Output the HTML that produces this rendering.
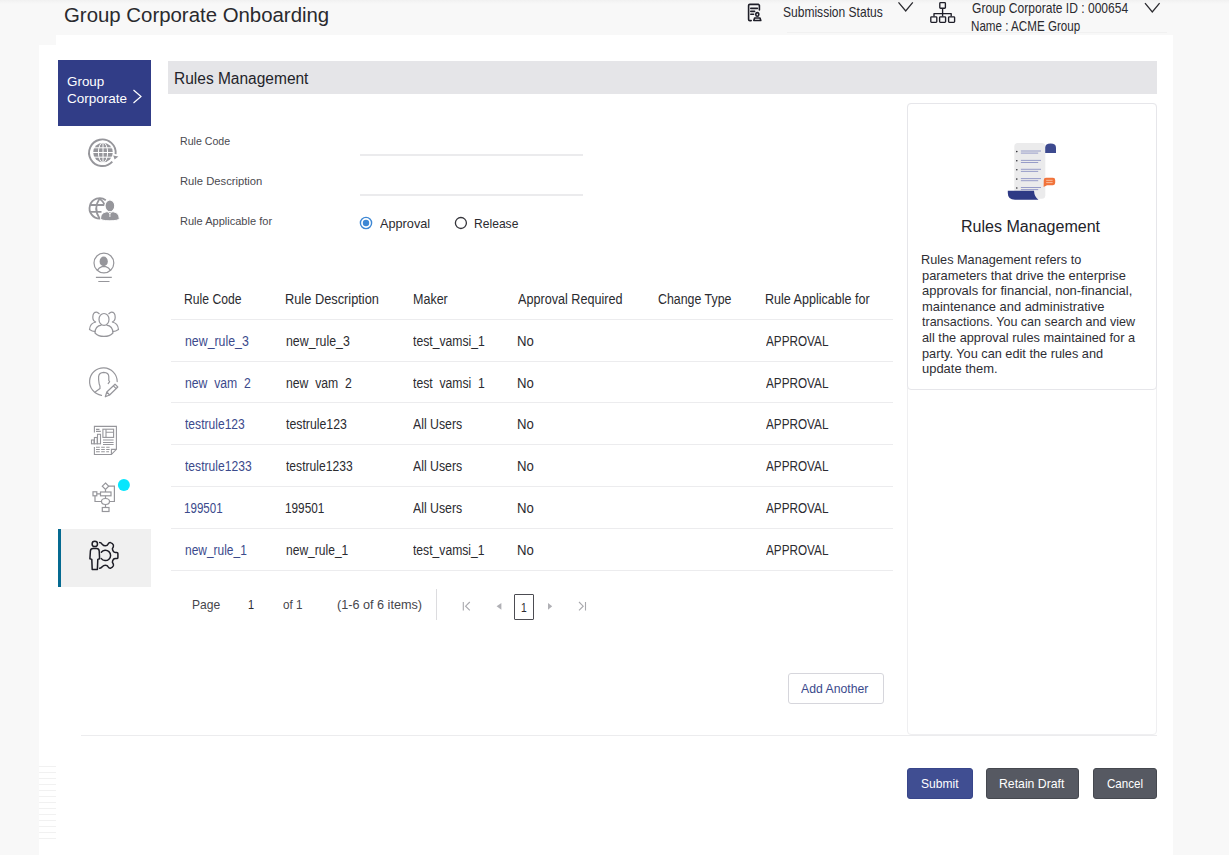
<!DOCTYPE html>
<html><head><meta charset="utf-8">
<style>
*{margin:0;padding:0;box-sizing:border-box}
html,body{width:1229px;height:855px;overflow:hidden;background:#f8f8f8;font-family:"Liberation Sans",sans-serif;color:#2b2b2f;position:relative}
.a{position:absolute;white-space:nowrap}
svg.a{overflow:visible}
</style></head><body>
<div class="a" style="left:0px;top:0px;width:1229px;height:4px;background:linear-gradient(#f1f1f1,#f8f8f8)"></div>
<div class="a" style="left:787px;top:32px;width:380px;height:1px;background:#f1f1f1"></div>
<div class="a" style="left:39px;top:45px;width:1134px;height:810px;background:#fff"></div>
<div class="a" style="left:56px;top:35px;width:1117px;height:10px;background:#fff"></div>
<div class="a" style="left:39px;top:766px;width:17px;height:1px;background:#f1f1f1"></div>
<div class="a" style="left:39px;top:772px;width:17px;height:1px;background:#f1f1f1"></div>
<div class="a" style="left:39px;top:778px;width:17px;height:1px;background:#f1f1f1"></div>
<div class="a" style="left:39px;top:784px;width:17px;height:1px;background:#f1f1f1"></div>
<div class="a" style="left:39px;top:790px;width:17px;height:1px;background:#f1f1f1"></div>
<div class="a" style="left:39px;top:796px;width:17px;height:1px;background:#f1f1f1"></div>
<div class="a" style="left:39px;top:802px;width:17px;height:1px;background:#f1f1f1"></div>
<div class="a" style="left:39px;top:808px;width:17px;height:1px;background:#f1f1f1"></div>
<div class="a" style="left:39px;top:814px;width:17px;height:1px;background:#f1f1f1"></div>
<div class="a" style="left:39px;top:820px;width:17px;height:1px;background:#f1f1f1"></div>
<div class="a" style="left:39px;top:826px;width:17px;height:1px;background:#f1f1f1"></div>
<div class="a" style="left:39px;top:832px;width:17px;height:1px;background:#f1f1f1"></div>
<div class="a" style="left:39px;top:838px;width:17px;height:1px;background:#f1f1f1"></div>
<div class="a" style="left:63.91px;top:4.75px;font-size:20.5px;line-height:20.5px;color:#2a2a2e;font-weight:normal;transform:scaleX(0.9945);transform-origin:0 0;">Group Corporate Onboarding</div>
<svg class="a" style="left:740px;top:0px" width="30" height="30" viewBox="0 0 30 30"><g fill="none" stroke="#1e1e28" stroke-width="1.6" stroke-linecap="round" stroke-linejoin="round">
<path d="M11.2 20.6 H9.8 Q8.6 20.6 8.6 19.4 V5.6 Q8.6 4.4 9.8 4.4 H18.4 L19.4 5.4 V10"/>
<path d="M10.8 8.4 H17.4 M10.8 11.4 H14.6 M10.8 14.3 H13.6"/>
<ellipse cx="17.3" cy="14.4" rx="1.5" ry="1.8"/>
<path d="M13.8 20.5 L14.6 18 H20 L20.8 20.5 Z"/></g></svg>
<div class="a" style="left:782.90px;top:4.40px;font-size:15px;line-height:15px;color:#2b2b30;font-weight:normal;transform:scaleX(0.8026);transform-origin:0 0;">Submission Status</div>
<svg class="a" style="left:895px;top:0px" width="20" height="14" viewBox="0 0 20 14"><path d="M3.5 2.3 L10.7 11 L17.8 2.3" fill="none" stroke="#2b2b30" stroke-width="1.3"/></svg>
<svg class="a" style="left:928px;top:0px" width="30" height="26" viewBox="0 0 30 26"><g fill="none" stroke="#1e1e28" stroke-width="1.35" stroke-linejoin="round">
<rect x="11.8" y="2.6" width="5.6" height="5.6" rx="0.8"/>
<path d="M14.6 8.2 V13.6 M6 16.6 V13.6 H23.2 V16.6 M14.6 13.6 V16.6"/>
<rect x="2.8" y="16.8" width="6" height="5.6" rx="0.8"/>
<rect x="11.6" y="16.8" width="6" height="5.6" rx="0.8"/>
<rect x="20.6" y="16.8" width="6" height="5.6" rx="0.8"/></g></svg>
<div class="a" style="left:972.20px;top:1.03px;font-size:14.5px;line-height:14.5px;color:#2b2b30;font-weight:normal;transform:scaleX(0.8315);transform-origin:0 0;">Group Corporate ID : 000654</div>
<div class="a" style="left:971.40px;top:18.53px;font-size:14.5px;line-height:14.5px;color:#2b2b30;font-weight:normal;transform:scaleX(0.8019);transform-origin:0 0;">Name : ACME Group</div>
<svg class="a" style="left:1142px;top:0px" width="20" height="14" viewBox="0 0 20 14"><path d="M3 3.2 L10.3 12 L17.6 3.2" fill="none" stroke="#2b2b30" stroke-width="1.3"/></svg>
<div class="a" style="left:58px;top:60px;width:93px;height:66px;background:#313d87"></div>
<div class="a" style="left:67.30px;top:75.20px;font-size:13px;line-height:13px;color:#fff;font-weight:normal;transform:scaleX(1.0306);transform-origin:0 0;">Group</div>
<div class="a" style="left:67.30px;top:92.20px;font-size:13px;line-height:13px;color:#fff;font-weight:normal;transform:scaleX(1.0369);transform-origin:0 0;">Corporate</div>
<svg class="a" style="left:130px;top:88px" width="14" height="17" viewBox="0 0 14 17"><path d="M3.5 2 L11 8.5 L3.5 15" fill="none" stroke="#fff" stroke-width="1.2"/></svg>
<svg class="a" style="left:84px;top:134px" width="40" height="40" viewBox="0 0 40 40"><g fill="none" stroke="#96969b" stroke-width="1.9">
<path d="M28.3 27.6 A13.3 13.3 0 1 1 31.6 20.2"/></g>
<path d="M29.2 21.4 L34.4 22.6 L30.6 25.4 Z" fill="#96969b"/>
<circle cx="19" cy="18.5" r="9.8" fill="#96969b"/>
<g fill="none" stroke="#fff" stroke-width="1">
<path d="M9 18.5 H29 M9.5 13.8 H28.5 M9.5 23.2 H28.5"/>
<ellipse cx="19" cy="18.5" rx="4.6" ry="10"/>
<path d="M19 8.5 V28.5"/></g></svg>
<svg class="a" style="left:84px;top:190px" width="40" height="40" viewBox="0 0 40 40"><g fill="none" stroke="#96969b" stroke-width="1.8">
<path d="M21.8 10.2 A10.2 10.2 0 1 0 16.2 28.6"/>
<path d="M15.6 8.6 Q8.8 18.6 15.6 28.6 M15.6 8.6 Q18.8 11 20.6 14.6 M6.2 15 H20.5 M6.2 21.8 H17.5"/></g>
<ellipse cx="25.9" cy="15.8" rx="4.9" ry="6" fill="#96969b" stroke="#fff" stroke-width="1.2"/>
<path d="M16.6 28.4 Q16.6 22.8 22.4 21.8 H29.4 Q35.2 22.8 35.2 28.4 Q35.2 30.8 25.9 30.8 Q16.6 30.8 16.6 28.4Z" fill="#96969b" stroke="#fff" stroke-width="1"/>
<path d="M24.4 22.2 L25.9 24 L27.4 22.2 M25.9 24 V27" stroke="#fff" stroke-width="0.9" fill="none"/></svg>
<svg class="a" style="left:84px;top:247px" width="40" height="40" viewBox="0 0 40 40"><g fill="none" stroke="#96969b" stroke-width="1.2">
<circle cx="19.9" cy="16" r="9.9"/>
<path d="M13.3 23.4 Q15 20.6 18 19.6 H21.8 Q24.8 20.6 26.5 23.4"/>
<path d="M11.9 30.4 H27.8 M14.3 34.5 H25.5"/></g>
<ellipse cx="19.7" cy="14.4" rx="4.1" ry="4.9" fill="#96969b"/></svg>
<svg class="a" style="left:84px;top:304px" width="40" height="40" viewBox="0 0 40 40"><g fill="none" stroke="#96969b" stroke-width="1.2">
<path d="M15.5 10 Q13.5 8.2 12.6 8.2 Q8.8 8.2 8.8 13.2 Q8.8 17 12 18 Q6 19 5.5 25.5 Q8 27.5 11.3 27.6"/>
<path d="M24.5 10 Q26.5 8.2 27.4 8.2 Q31.2 8.2 31.2 13.2 Q31.2 17 28 18 Q34 19 34.5 25.5 Q32 27.5 28.7 27.6"/>
<ellipse cx="20" cy="15.4" rx="5" ry="5.9"/>
<path d="M17.5 21.2 Q11 22 11 29 Q14 32.4 20 32.4 Q26 32.4 28.9 29 Q28.9 22 22.5 21.2"/></g></svg>
<svg class="a" style="left:84px;top:362px" width="40" height="40" viewBox="0 0 40 40"><g fill="none" stroke="#96969b" stroke-width="1.2" stroke-linecap="round" stroke-linejoin="round">
<path d="M33.2 19.6 A13.8 13.8 0 1 0 17.5 33.3"/>
<path d="M11.5 29.8 L16 26.6 Q16.6 24.5 15.2 22 Q14.4 18 14.6 14.6 Q15 10.6 19.8 10.4 Q24.6 10.6 24.8 14.6 V18.5 L25.6 19.6 L24.2 21.6"/>
<path d="M21.3 34.8 L22.8 30 L31 22.2 L33.8 25 L25.6 33 Z M29.4 23.8 L32.2 26.6 M22.8 30 L25.6 33"/></g></svg>
<svg class="a" style="left:84px;top:420px" width="40" height="40" viewBox="0 0 40 40"><g fill="none" stroke="#96969b" stroke-width="1.1">
<path d="M10.4 12.6 V6.4 H32.4 V29.4 L27.4 34.5 H10.4 V27"/>
<path d="M27.4 34.5 V29.4 H32.4"/>
<rect x="7.5" y="20" width="2.6" height="3.8"/><rect x="10.4" y="17.5" width="2.8" height="6.3"/><rect x="13.5" y="14.3" width="3" height="9.5"/>
<rect x="18.9" y="9.2" width="10.7" height="8.2"/><path d="M22 9.2 V17.4 M22 12.3 H29.6"/>
<path d="M12 9.4 H15.5 M12 11.4 H16.8 M19 20 H29.6 M19 22.5 H29.6 M19 24.5 H29.6 M12 27.3 H15.8 M17.2 27.3 H20.8 M22.2 27.3 H25.6 M12 29.5 H15.8 M17.2 29.5 H20.8 M22.2 29.5 H25.6 M12 31.8 H15.8 M17.2 31.8 H20.8 M22.2 31.8 H25"/></g></svg>
<svg class="a" style="left:84px;top:474px" width="50" height="50" viewBox="0 0 50 50"><g fill="none" stroke="#96969b" stroke-width="1.2">
<path d="M21.5 9 L24.7 12.2 L21.5 15.4 L18.3 12.2 Z"/>
<path d="M24.7 12.2 H30.4 V27.5 H25.5 M21.5 15.4 V18 M21.5 21.8 V24.5 M12.8 19.8 H16.5 M11 21.8 V27.5 H17.5 M21.5 30.5 V33.5"/>
<rect x="16.5" y="18" width="10.5" height="3.8"/>
<rect x="9" y="17.8" width="3.8" height="4"/>
<ellipse cx="21.5" cy="27.5" rx="4" ry="3"/>
<rect x="18.3" y="33.5" width="6.7" height="4"/></g>
<circle cx="39.9" cy="11" r="6" fill="#07e6fd"/></svg>
<div class="a" style="left:58px;top:529px;width:93px;height:58px;background:#f0f0f0"></div>
<div class="a" style="left:58px;top:529px;width:3px;height:58px;background:#056a91"></div>
<svg class="a" style="left:84px;top:535px" width="40" height="40" viewBox="0 0 40 40"><g fill="none" stroke="#1d1d26" stroke-width="1.5" stroke-linejoin="round" stroke-linecap="round">
<circle cx="10.8" cy="8.9" r="2.7"/>
<path d="M9 13.6 H12.6 Q15 13.6 15.2 16 L15.6 23.8 L13.8 24.4 L13.4 34.4 H8.2 L7.8 24.4 L5.9 23.8 L6.4 16 Q6.6 13.6 9 13.6 Z"/>
<path d="M17.3 17.2 A5.2 5.2 0 1 1 17.3 23.6"/>
<path d="M15.6 7.6 Q17 7.6 18.2 9.2 Q19.5 10.8 21.4 10.8 Q23.4 10.8 24 9.2 Q25 7.4 26.4 7.6 Q28.6 8.2 29.4 10 Q29.8 11.6 28.4 13.6 Q28.4 15 29.5 16.6 Q30 17.4 31.5 17.4 H32.8 Q33.9 17.4 33.9 18.6 V22.4 Q33.9 23.6 32.8 23.6 H31.5 Q30 23.6 29.5 24.3 Q28.4 25.9 28.4 27.2 Q29.8 29.2 29.4 30.8 Q28.6 32.6 26.4 33.2 Q25 33.4 24 31.6 Q23.4 30.2 21.4 30.2 Q19.5 30.2 18.2 31.8 Q17 33.4 15.6 33.2"/></g></svg>
<div class="a" style="left:168px;top:61px;width:989px;height:33px;background:#e5e5e8"></div>
<div class="a" style="left:173.83px;top:70.86px;font-size:16px;line-height:16px;color:#23232a;font-weight:normal;transform:scaleX(0.9689);transform-origin:0 0;">Rules Management</div>
<div class="a" style="left:180.00px;top:135.73px;font-size:11.3px;line-height:11.3px;color:#4a4a50;font-weight:normal;transform:scaleX(0.9379);transform-origin:0 0;">Rule Code</div>
<div class="a" style="left:360px;top:154px;width:223px;height:2px;background:#ebebed"></div>
<div class="a" style="left:180.00px;top:175.63px;font-size:11.3px;line-height:11.3px;color:#4a4a50;font-weight:normal;transform:scaleX(0.9928);transform-origin:0 0;">Rule Description</div>
<div class="a" style="left:360px;top:194px;width:223px;height:2px;background:#ebebed"></div>
<div class="a" style="left:180.00px;top:215.53px;font-size:11.3px;line-height:11.3px;color:#4a4a50;font-weight:normal;transform:scaleX(0.9773);transform-origin:0 0;">Rule Applicable for</div>
<svg class="a" style="left:358px;top:215px" width="16" height="16" viewBox="0 0 16 16"><circle cx="8" cy="8" r="5.6" fill="none" stroke="#3d87d4" stroke-width="1.4"/><circle cx="8" cy="8" r="3.2" fill="#3d87d4"/></svg>
<div class="a" style="left:380.00px;top:217.16px;font-size:13.4px;line-height:13.4px;color:#2b2b30;font-weight:normal;transform:scaleX(0.9494);transform-origin:0 0;">Approval</div>
<svg class="a" style="left:453px;top:215px" width="16" height="16" viewBox="0 0 16 16"><circle cx="7.9" cy="8" r="5.5" fill="none" stroke="#34343a" stroke-width="1.3"/></svg>
<div class="a" style="left:473.60px;top:217.16px;font-size:13.4px;line-height:13.4px;color:#2b2b30;font-weight:normal;transform:scaleX(0.9039);transform-origin:0 0;">Release</div>
<div class="a" style="left:184.23px;top:292.25px;font-size:14px;line-height:14px;color:#2b2b30;font-weight:normal;transform:scaleX(0.8690);transform-origin:0 0;">Rule Code</div>
<div class="a" style="left:284.99px;top:292.25px;font-size:14px;line-height:14px;color:#2b2b30;font-weight:normal;transform:scaleX(0.9146);transform-origin:0 0;">Rule Description</div>
<div class="a" style="left:412.51px;top:292.25px;font-size:14px;line-height:14px;color:#2b2b30;font-weight:normal;transform:scaleX(0.8945);transform-origin:0 0;">Maker</div>
<div class="a" style="left:518.40px;top:292.25px;font-size:14px;line-height:14px;color:#2b2b30;font-weight:normal;transform:scaleX(0.9021);transform-origin:0 0;">Approval Required</div>
<div class="a" style="left:658.10px;top:292.25px;font-size:14px;line-height:14px;color:#2b2b30;font-weight:normal;transform:scaleX(0.8839);transform-origin:0 0;">Change Type</div>
<div class="a" style="left:765.00px;top:292.25px;font-size:14px;line-height:14px;color:#2b2b30;font-weight:normal;transform:scaleX(0.8960);transform-origin:0 0;">Rule Applicable for</div>
<div class="a" style="left:171px;top:319px;width:722px;height:1px;background:#ececee"></div>
<div class="a" style="left:171px;top:361px;width:722px;height:1px;background:#ececee"></div>
<div class="a" style="left:171px;top:402px;width:722px;height:1px;background:#ececee"></div>
<div class="a" style="left:171px;top:444px;width:722px;height:1px;background:#ececee"></div>
<div class="a" style="left:171px;top:486px;width:722px;height:1px;background:#ececee"></div>
<div class="a" style="left:171px;top:528px;width:722px;height:1px;background:#ececee"></div>
<div class="a" style="left:171px;top:570px;width:722px;height:1px;background:#ececee"></div>
<div class="a" style="left:185.20px;top:334.15px;font-size:14px;line-height:14px;color:#3b4a8c;font-weight:normal;transform:scaleX(0.8815);transform-origin:0 0;">new_rule_3</div>
<div class="a" style="left:285.60px;top:334.15px;font-size:14px;line-height:14px;color:#2b2b30;font-weight:normal;transform:scaleX(0.8815);transform-origin:0 0;">new_rule_3</div>
<div class="a" style="left:413.20px;top:334.15px;font-size:14px;line-height:14px;color:#2b2b30;font-weight:normal;transform:scaleX(0.8707);transform-origin:0 0;">test_vamsi_1</div>
<div class="a" style="left:517.36px;top:334.15px;font-size:14px;line-height:14px;color:#2b2b30;font-weight:normal;transform:scaleX(0.9410);transform-origin:0 0;">No</div>
<div class="a" style="left:766.00px;top:334.15px;font-size:14px;line-height:14px;color:#2b2b30;font-weight:normal;transform:scaleX(0.8386);transform-origin:0 0;">APPROVAL</div>
<div class="a" style="left:185.20px;top:376.25px;font-size:14px;line-height:14px;color:#3b4a8c;font-weight:normal;transform:scaleX(0.8720);transform-origin:0 0;">new&nbsp;&nbsp;vam&nbsp;&nbsp;2</div>
<div class="a" style="left:285.60px;top:376.25px;font-size:14px;line-height:14px;color:#2b2b30;font-weight:normal;transform:scaleX(0.8720);transform-origin:0 0;">new&nbsp;&nbsp;vam&nbsp;&nbsp;2</div>
<div class="a" style="left:413.20px;top:376.25px;font-size:14px;line-height:14px;color:#2b2b30;font-weight:normal;transform:scaleX(0.8708);transform-origin:0 0;">test&nbsp;&nbsp;vamsi&nbsp;&nbsp;1</div>
<div class="a" style="left:517.36px;top:376.25px;font-size:14px;line-height:14px;color:#2b2b30;font-weight:normal;transform:scaleX(0.9410);transform-origin:0 0;">No</div>
<div class="a" style="left:766.00px;top:376.25px;font-size:14px;line-height:14px;color:#2b2b30;font-weight:normal;transform:scaleX(0.8386);transform-origin:0 0;">APPROVAL</div>
<div class="a" style="left:185.20px;top:417.35px;font-size:14px;line-height:14px;color:#3b4a8c;font-weight:normal;transform:scaleX(0.8635);transform-origin:0 0;">testrule123</div>
<div class="a" style="left:285.60px;top:417.35px;font-size:14px;line-height:14px;color:#2b2b30;font-weight:normal;transform:scaleX(0.8779);transform-origin:0 0;">testrule123</div>
<div class="a" style="left:413.20px;top:417.35px;font-size:14px;line-height:14px;color:#2b2b30;font-weight:normal;transform:scaleX(0.8785);transform-origin:0 0;">All Users</div>
<div class="a" style="left:517.36px;top:417.35px;font-size:14px;line-height:14px;color:#2b2b30;font-weight:normal;transform:scaleX(0.9410);transform-origin:0 0;">No</div>
<div class="a" style="left:766.00px;top:417.35px;font-size:14px;line-height:14px;color:#2b2b30;font-weight:normal;transform:scaleX(0.8386);transform-origin:0 0;">APPROVAL</div>
<div class="a" style="left:185.20px;top:459.05px;font-size:14px;line-height:14px;color:#3b4a8c;font-weight:normal;transform:scaleX(0.8645);transform-origin:0 0;">testrule1233</div>
<div class="a" style="left:285.60px;top:459.05px;font-size:14px;line-height:14px;color:#2b2b30;font-weight:normal;transform:scaleX(0.8645);transform-origin:0 0;">testrule1233</div>
<div class="a" style="left:413.20px;top:459.05px;font-size:14px;line-height:14px;color:#2b2b30;font-weight:normal;transform:scaleX(0.8785);transform-origin:0 0;">All Users</div>
<div class="a" style="left:517.36px;top:459.05px;font-size:14px;line-height:14px;color:#2b2b30;font-weight:normal;transform:scaleX(0.9410);transform-origin:0 0;">No</div>
<div class="a" style="left:766.00px;top:459.05px;font-size:14px;line-height:14px;color:#2b2b30;font-weight:normal;transform:scaleX(0.8386);transform-origin:0 0;">APPROVAL</div>
<div class="a" style="left:184.37px;top:501.15px;font-size:14px;line-height:14px;color:#3b4a8c;font-weight:normal;transform:scaleX(0.8273);transform-origin:0 0;">199501</div>
<div class="a" style="left:284.76px;top:501.15px;font-size:14px;line-height:14px;color:#2b2b30;font-weight:normal;transform:scaleX(0.8426);transform-origin:0 0;">199501</div>
<div class="a" style="left:413.20px;top:501.15px;font-size:14px;line-height:14px;color:#2b2b30;font-weight:normal;transform:scaleX(0.8785);transform-origin:0 0;">All Users</div>
<div class="a" style="left:517.36px;top:501.15px;font-size:14px;line-height:14px;color:#2b2b30;font-weight:normal;transform:scaleX(0.9410);transform-origin:0 0;">No</div>
<div class="a" style="left:766.00px;top:501.15px;font-size:14px;line-height:14px;color:#2b2b30;font-weight:normal;transform:scaleX(0.8386);transform-origin:0 0;">APPROVAL</div>
<div class="a" style="left:185.20px;top:543.25px;font-size:14px;line-height:14px;color:#3b4a8c;font-weight:normal;transform:scaleX(0.8540);transform-origin:0 0;">new_rule_1</div>
<div class="a" style="left:285.60px;top:543.25px;font-size:14px;line-height:14px;color:#2b2b30;font-weight:normal;transform:scaleX(0.8609);transform-origin:0 0;">new_rule_1</div>
<div class="a" style="left:413.20px;top:543.25px;font-size:14px;line-height:14px;color:#2b2b30;font-weight:normal;transform:scaleX(0.8670);transform-origin:0 0;">test_vamsi_1</div>
<div class="a" style="left:517.36px;top:543.25px;font-size:14px;line-height:14px;color:#2b2b30;font-weight:normal;transform:scaleX(0.9410);transform-origin:0 0;">No</div>
<div class="a" style="left:766.00px;top:543.25px;font-size:14px;line-height:14px;color:#2b2b30;font-weight:normal;transform:scaleX(0.8386);transform-origin:0 0;">APPROVAL</div>
<div class="a" style="left:191.50px;top:598.06px;font-size:13.4px;line-height:13.4px;color:#46464c;font-weight:normal;transform:scaleX(0.9019);transform-origin:0 0;">Page</div>
<div class="a" style="left:248.08px;top:598.06px;font-size:13.4px;line-height:13.4px;color:#2b2b30;font-weight:normal;transform:scaleX(0.8167);transform-origin:0 0;">1</div>
<div class="a" style="left:282.70px;top:598.06px;font-size:13.4px;line-height:13.4px;color:#46464c;font-weight:normal;transform:scaleX(0.8726);transform-origin:0 0;">of 1</div>
<div class="a" style="left:336.90px;top:598.06px;font-size:13.4px;line-height:13.4px;color:#46464c;font-weight:normal;transform:scaleX(0.9444);transform-origin:0 0;">(1-6 of 6 items)</div>
<div class="a" style="left:436px;top:589px;width:1px;height:31px;background:#dcdcdf"></div>
<svg class="a" style="left:455px;top:595px" width="140" height="22" viewBox="0 0 140 22"><g fill="none" stroke="#a8a8ad" stroke-width="1.1">
<path d="M8.3 7 V15.4 M14.8 7 L10.6 11.2 L14.8 15.4"/>
<path d="M130.5 7 V15.4 M124 7 L128.2 11.2 L124 15.4"/></g>
<path d="M46.4 8 L41.6 11.3 L46.4 14.7Z" fill="#b0b0b5"/>
<path d="M93 8 L97.2 11.3 L93 14.7Z" fill="#b0b0b5"/></svg>
<div class="a" style="left:514px;top:594px;width:20px;height:25.5px;border:1px solid #4c4c52;border-radius:1px"></div>
<div class="a" style="left:521.23px;top:600.76px;font-size:13.4px;line-height:13.4px;color:#2b2b30;font-weight:normal;transform:scaleX(0.7667);transform-origin:0 0;">1</div>
<div class="a" style="left:788px;top:672.6px;width:96px;height:31.8px;border:1px solid #d6d6dc;border-radius:3px"></div>
<div class="a" style="left:801.30px;top:682.56px;font-size:12.8px;line-height:12.8px;color:#3b4a8c;font-weight:normal;transform:scaleX(0.9557);transform-origin:0 0;">Add Another</div>
<div class="a" style="left:907px;top:103px;width:250px;height:632px;border:1px solid #efeff1;border-radius:4px"></div>
<div class="a" style="left:907px;top:103px;width:250px;height:287px;border:1.5px solid #e6e6ea;border-radius:4px;background:#fff"></div>
<svg class="a" style="left:1000px;top:135px" width="64" height="70" viewBox="0 0 64 70"><rect x="14.3" y="8" width="31" height="55.7" rx="3.5" fill="#ebebec"/>
<path d="M45.2 17.9 V12.4 Q45.2 8.6 50.6 8.6 Q56 8.6 56 12.4 V17.9 Z" fill="#3d4a8f"/>
<g stroke="#8d93c4" stroke-width="0.9">
<path d="M20.9 16 H41 M20.9 18.1 H38.2 M20.9 25.4 H41 M20.9 27.5 H38.2 M20.9 34.3 H41 M20.9 36.4 H38.2 M20.9 43.6 H41 M20.9 45.7 H38.2 M20.9 52.5 H41 M20.9 54.6 H38.2"/></g>
<g fill="#2a2a30"><circle cx="16.8" cy="16.6" r="0.8"/><circle cx="16.8" cy="25.8" r="0.8"/><circle cx="16.8" cy="34.8" r="0.8"/><circle cx="16.8" cy="44.1" r="0.8"/><circle cx="16.8" cy="53" r="0.8"/></g>
<path d="M46 42.7 H53 Q55.2 42.7 55.2 45 V47.8 Q55.2 50.2 53 50.2 H47 L43.6 52 L43.8 45 Q43.8 42.7 46 42.7Z" fill="#f1733b"/>
<path d="M46.2 45.3 H52.6 M46.2 47.6 H52.6" stroke="#fbd0b8" stroke-width="0.8"/>
<path d="M7.8 55.8 H34 Q34.3 62 38.5 64.7 H15 Q7.8 64.7 7.8 58 Z" fill="#2e3a85"/></svg>
<div class="a" style="left:961.40px;top:218.76px;font-size:16px;line-height:16px;color:#23232a;font-weight:normal;transform:scaleX(1.0022);transform-origin:0 0;">Rules Management</div>
<div class="a" style="left:921.14px;top:252.93px;font-size:13.2px;line-height:13.2px;color:#2e2e34;font-weight:normal;transform:scaleX(0.9633);transform-origin:0 0;">Rules Management refers to</div>
<div class="a" style="left:922.10px;top:268.57px;font-size:13.2px;line-height:13.2px;color:#2e2e34;font-weight:normal;transform:scaleX(0.9757);transform-origin:0 0;">parameters that drive the enterprise</div>
<div class="a" style="left:922.10px;top:284.21px;font-size:13.2px;line-height:13.2px;color:#2e2e34;font-weight:normal;transform:scaleX(0.9822);transform-origin:0 0;">approvals for financial, non-financial,</div>
<div class="a" style="left:922.10px;top:299.85px;font-size:13.2px;line-height:13.2px;color:#2e2e34;font-weight:normal;transform:scaleX(0.9792);transform-origin:0 0;">maintenance and administrative</div>
<div class="a" style="left:922.10px;top:315.49px;font-size:13.2px;line-height:13.2px;color:#2e2e34;font-weight:normal;transform:scaleX(0.9496);transform-origin:0 0;">transactions. You can search and view</div>
<div class="a" style="left:922.10px;top:331.13px;font-size:13.2px;line-height:13.2px;color:#2e2e34;font-weight:normal;transform:scaleX(0.9688);transform-origin:0 0;">all the approval rules maintained for a</div>
<div class="a" style="left:922.10px;top:346.77px;font-size:13.2px;line-height:13.2px;color:#2e2e34;font-weight:normal;transform:scaleX(0.9661);transform-origin:0 0;">party. You can edit the rules and</div>
<div class="a" style="left:922.10px;top:362.41px;font-size:13.2px;line-height:13.2px;color:#2e2e34;font-weight:normal;transform:scaleX(0.9827);transform-origin:0 0;">update them.</div>
<div class="a" style="left:81px;top:735px;width:1076px;height:1px;background:#ececee"></div>
<div class="a" style="left:907px;top:767.5px;width:66px;height:31.3px;background:#404e92;border:1px solid #38468a;border-radius:3px"></div>
<div class="a" style="left:920.90px;top:776.99px;font-size:13.6px;line-height:13.6px;color:#fff;font-weight:normal;transform:scaleX(0.8864);transform-origin:0 0;">Submit</div>
<div class="a" style="left:986px;top:767.5px;width:93px;height:31.3px;background:#565962;border:1px solid #45484f;border-radius:3px"></div>
<div class="a" style="left:999.40px;top:776.99px;font-size:13.6px;line-height:13.6px;color:#fff;font-weight:normal;transform:scaleX(0.9017);transform-origin:0 0;">Retain Draft</div>
<div class="a" style="left:1093px;top:767.5px;width:64px;height:31.3px;background:#565962;border:1px solid #45484f;border-radius:3px"></div>
<div class="a" style="left:1106.60px;top:776.99px;font-size:13.6px;line-height:13.6px;color:#fff;font-weight:normal;transform:scaleX(0.8512);transform-origin:0 0;">Cancel</div>
</body></html>
